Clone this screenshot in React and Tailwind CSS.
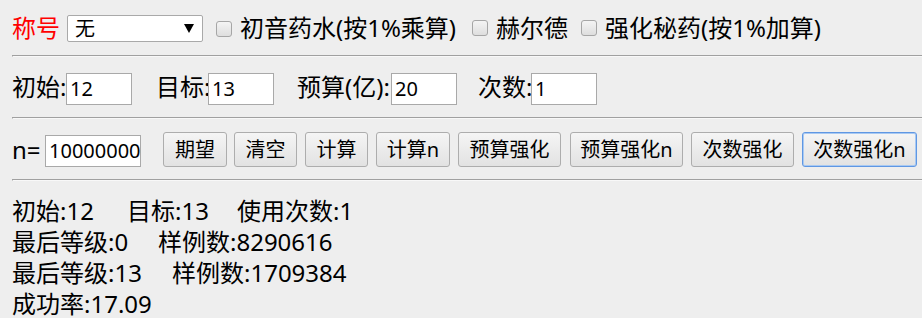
import React from "react";

function Checkbox() {
  return (
    <span className="inline-block w-[16px] h-[16px] rounded-[3px] border border-[#a6a6a6] bg-gradient-to-b from-[#f4f4f4] to-[#dedede] shrink-0" />
  );
}

function Btn({ children, w, ml, focus }) {
  return (
    <div
      className={
        (focus
          ? "border border-[#5f97e3] shadow-[inset_0_0_0_1px_#a8c9f2] "
          : "border border-[#adadad] ") +
        "h-[35px] rounded-[3px] bg-gradient-to-b from-[#f5f5f5] to-[#e2e2e2] text-[20px] leading-[33px] text-black flex items-center justify-center shrink-0"
      }
      style={{ width: w, marginLeft: ml }}
    >
      {children}
    </div>
  );
}

function Input({ w, value }) {
  return (
    <div
      className="h-[32px] bg-white border border-[#a9a9a9] text-[20px] leading-[30px] pl-[3px] shrink-0 text-black"
      style={{ width: w }}
    >
      {value}
    </div>
  );
}

function Hr({ mt }) {
  return (
    <div className={"h-[2px] border-t border-l border-[#a0a0a0] border-b border-b-[#f8f8f8] " + mt} />
  );
}

export default function App() {
  return (
    <div className="min-h-screen w-full bg-[#eeeeee] pl-[12px] pt-[12px] text-black text-[24px] font-['Noto_Sans','Noto_Sans_CJK_SC',sans-serif] overflow-hidden">
      {/* Row 1 */}
      <div className="flex items-center h-[32px] whitespace-nowrap">
        <span className="w-[55px] text-[#ff0000] leading-[32px]">称号</span>
        <div className="w-[136px] h-[27px] bg-white border border-[#a9a9a9] rounded-[2px] flex items-center justify-between pl-[7px] pr-[8px] text-[20px] leading-[25px]">
          <span>无</span>
          <svg width="10" height="9" viewBox="0 0 10 9">
            <path d="M0 0 H10 L5 9 Z" fill="#000" />
          </svg>
        </div>
        <div className="ml-[13px]"><Checkbox /></div>
        <span className="ml-[8px] w-[232px] leading-[32px]">初音药水(按1%乘算)</span>
        <Checkbox />
        <span className="ml-[8px] w-[85px] leading-[32px]">赫尔德</span>
        <Checkbox />
        <span className="ml-[8px] leading-[32px]">强化秘药(按1%加算)</span>
      </div>

      <Hr mt="mt-[11px]" />

      {/* Row 2 */}
      <div className="flex items-center h-[32px] mt-[16px] whitespace-nowrap">
        <span className="w-[54px] leading-[32px] -mt-[4px]">初始:</span>
        <Input w="66px" value="12" />
        <span className="ml-[24px] w-[52px] leading-[32px] -mt-[4px]">目标:</span>
        <Input w="66px" value="13" />
        <span className="ml-[23px] w-[94px] leading-[32px] -mt-[4px]">预算(亿):</span>
        <Input w="66px" value="20" />
        <span className="ml-[21px] w-[53px] leading-[32px] -mt-[4px]">次数:</span>
        <Input w="66px" value="1" />
      </div>

      <Hr mt="mt-[12px]" />

      {/* Row 3 */}
      <div className="flex items-end h-[35px] mt-[13px] whitespace-nowrap">
        <span className="w-[33px] leading-[32px] mb-[1px]">n=</span>
        <Input w="96px" value="10000000" />
        <div className="ml-[22px] flex items-end">
          <Btn w="64px" ml="0px">期望</Btn>
          <Btn w="63px" ml="7px">清空</Btn>
          <Btn w="63px" ml="8px">计算</Btn>
          <Btn w="74px" ml="8px">计算n</Btn>
          <Btn w="103px" ml="8px">预算强化</Btn>
          <Btn w="113px" ml="9px">预算强化n</Btn>
          <Btn w="103px" ml="8px">次数强化</Btn>
          <Btn w="115px" ml="8px" focus>次数强化n</Btn>
        </div>
      </div>

      <Hr mt="mt-[12px]" />

      {/* Results */}
      <div className="mt-[14px] leading-[31px] whitespace-nowrap">
        <div className="flex">
          <span className="w-[115px]">初始:12</span>
          <span className="w-[110px]">目标:13</span>
          <span>使用次数:1</span>
        </div>
        <div className="flex">
          <span className="w-[146px]">最后等级:0</span>
          <span>样例数:8290616</span>
        </div>
        <div className="flex">
          <span className="w-[160px]">最后等级:13</span>
          <span>样例数:1709384</span>
        </div>
        <div className="flex mt-[2px] leading-[27px]">
          <span>成功率:17.09</span>
        </div>
      </div>
    </div>
  );
}
